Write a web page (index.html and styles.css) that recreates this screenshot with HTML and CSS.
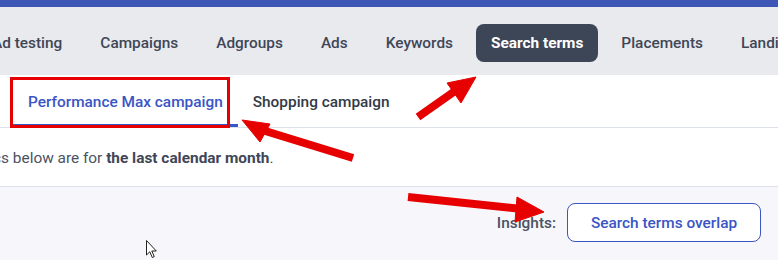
FILE: index.html
```html
<!DOCTYPE html>
<html lang="en">
<head>
    <meta charset="UTF-8">
    <meta name="viewport" content="width=device-width, initial-scale=1.0">
    <title>Search terms</title>
    <link rel="stylesheet" href="styles.css">
</head>
<body>

    <div class="topbar"></div>

    <nav class="nav">
        <a class="nav-item">Ad testing</a>
        <a class="nav-item">Campaigns</a>
        <a class="nav-item">Adgroups</a>
        <a class="nav-item">Ads</a>
        <a class="nav-item">Keywords</a>
        <a class="nav-item active">Search terms</a>
        <a class="nav-item">Placements</a>
        <a class="nav-item">Landing pages</a>
    </nav>

    <div class="subtabs">
        <a class="subtab active">Performance Max campaign</a>
        <a class="subtab">Shopping campaign</a>
    </div>

    <div class="notice">
        <p>Statistics below are for <b>the last calendar month</b>.</p>
    </div>

    <div class="insights">
        <span class="insights-label">Insights:</span>
        <button type="button" class="btn-outline">Search terms overlap</button>
    </div>

    <!-- annotations drawn over the screenshot -->
    <div class="mark-box"></div>
    <svg class="marks" width="778" height="260" viewBox="0 0 778 260">
        <g fill="#e60000" stroke="#e60000">
            <line x1="418" y1="117" x2="455" y2="91" stroke-width="8"/>
            <polygon points="476,77 447,83 461,103" stroke-width="1"/>
            <line x1="353" y1="158" x2="262" y2="130" stroke-width="8"/>
            <polygon points="242,120 270,124 260,142" stroke-width="1"/>
            <line x1="408" y1="197" x2="522" y2="209" stroke-width="8"/>
            <polygon points="544,212 517,197 515,222" stroke-width="1"/>
        </g>
        <path d="M146.5 240.5 L146.5 255 L149.8 251.8 L152.3 257.5 L154.3 256.6 L151.8 251 L156.3 251 Z" fill="#fff" stroke="#222" stroke-width="1"/>
    </svg>

</body>
</html>
```

FILE: styles.css
```css
body {
    font-family: Roboto, "Noto Sans", sans-serif;
    margin: 0;
    padding: 0;
    width: 778px;
    height: 260px;
    overflow: hidden;
    background-color: #f7f7fb;
    position: relative;
}
.topbar {
    height: 7px;
    background-color: #3e56b6;
}
.nav {
    display: flex;
    gap: 8px;
    height: 68px;
    box-sizing: border-box;
    padding-top: 17px;
    margin-left: -23px;
    background-color: #e9eaee;
    white-space: nowrap;
}
.nav-item {
    display: block;
    height: 38px;
    line-height: 38px;
    padding: 0 15px;
    border-radius: 8px;
    font-size: 15.4px;
    font-weight: 500;
    color: #3f4757;
}
.nav-item.active {
    background-color: #3d4656;
    color: #fff;
    font-weight: 700;
}
.subtabs {
    display: flex;
    height: 52px;
    padding-left: 13px;
    background-color: #fff;
    border-bottom: 1px solid #dde1ea;
}
.subtab {
    display: block;
    box-sizing: border-box;
    height: 52px;
    padding: 2px 15px 0;
    line-height: 50px;
    font-size: 15.4px;
    font-weight: 500;
    color: #333a46;
    border-bottom: 3px solid transparent;
}
.subtab.active {
    color: #3a55c4;
    border-bottom-color: #3a55c4;
}
.notice {
    background-color: #fff;
    height: 59px;
    box-sizing: border-box;
    padding-top: 3px;
    border-bottom: 1px solid #dde1ea;
    overflow: hidden;
}
.notice p {
    margin: 0 0 0 -55px;
    line-height: 55px;
    font-size: 15.4px;
    color: #4b5262;
    white-space: nowrap;
}
.notice b {
    color: #3f4757;
}
.insights {
    display: flex;
    align-items: center;
    justify-content: flex-end;
    gap: 11px;
    padding: 16px 17px 0 0;
}
.insights-label {
    font-size: 15.4px;
    font-weight: 500;
    color: #4b5262;
}
.btn-outline {
    width: 194px;
    height: 39px;
    background-color: #fff;
    border: 1px solid #3d55c0;
    border-radius: 8px;
    font-family: inherit;
    font-size: 15.4px;
    font-weight: 500;
    color: #3a55c4;
    cursor: pointer;
}
.mark-box {
    position: absolute;
    left: 10px;
    top: 77px;
    width: 220px;
    height: 51px;
    box-sizing: border-box;
    border: 3px solid #e60000;
}
.marks {
    position: absolute;
    left: 0;
    top: 0;
}
```
